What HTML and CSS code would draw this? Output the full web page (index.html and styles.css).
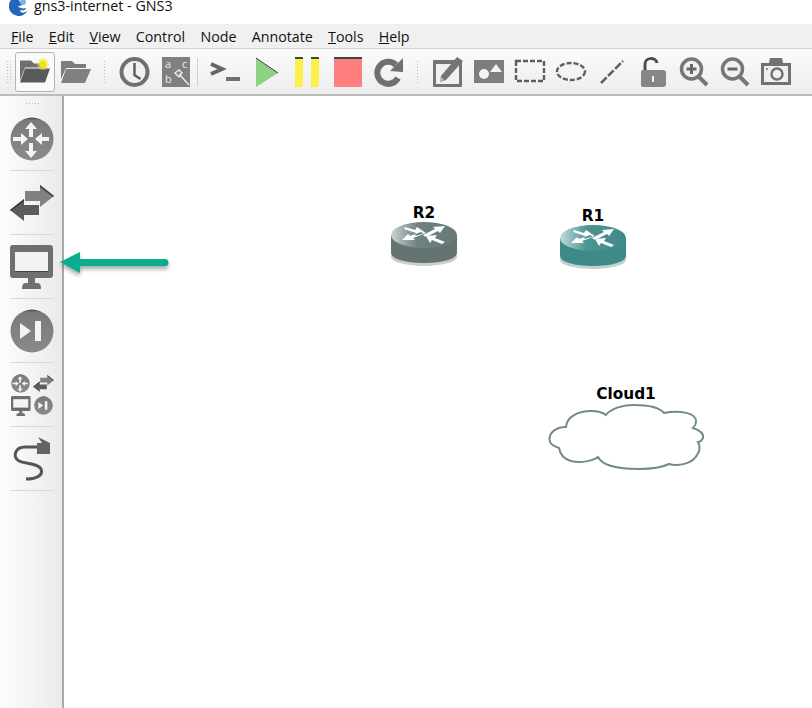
FILE: index.html
```html
<!DOCTYPE html>
<html lang="en">

<head>
    <meta charset="UTF-8">
    <meta name="viewport" content="width=device-width, initial-scale=1.0">
    <title>gns3-internet - GNS3</title>
    <link rel="stylesheet" href="styles.css">
</head>

<body>
    <svg class="defs" width="0" height="0">
        <defs>
            <linearGradient id="roundGrey" x1="0" y1="0" x2="0" y2="1">
                <stop offset="0" stop-color="#3c3c3c" />
                <stop offset="0.06" stop-color="#7a7a7a" />
                <stop offset="1" stop-color="#8a8a8a" />
            </linearGradient>
            <linearGradient id="sheenGrey" x1="0" y1="0" x2="1" y2="0">
                <stop offset="0" stop-color="#c9d3d2" />
                <stop offset="0.4" stop-color="#6f8280" />
                <stop offset="1" stop-color="#697a78" />
            </linearGradient>
            <linearGradient id="sheenTeal" x1="0" y1="0" x2="1" y2="0">
                <stop offset="0" stop-color="#c4dcdb" />
                <stop offset="0.4" stop-color="#4b9493" />
                <stop offset="1" stop-color="#3f8a89" />
            </linearGradient>
            <symbol id="dev-router" viewBox="0 0 44 44">
                <circle cx="22" cy="22" r="21.500" fill="url(#roundGrey)" />
                <path fill="#f4f4f4" d="M21 5l6 7h-4v8h-4v-8h-4zM21 41l6-7h-4v-8h-4v8h-4zM18 22l-7-6v4H3v4h8v4zM25 22l7-6v4h7v4h-7v4z" />
            </symbol>
            <symbol id="dev-switch" viewBox="0 0 44 36">
                <path fill="#808080" d="M15 6h15V0l14 11-14 11v-6H15z" />
                <path fill="#3c3c3c" d="M30 0l14 11-1 1-13-10z" />
                <path fill="#5c5c5c" d="M29 20H14v-6L0 25l14 11v-6h15z" />
                <path fill="#3c3c3c" d="M14 14L0 25l1 1 13-10z" />
            </symbol>
            <symbol id="dev-monitor" viewBox="0 0 44 44">
                <path fill="#6f6f6f" d="M3 0h37a3 3 0 0 1 3 3v27a3 3 0 0 1-3 3H25v5h3c2 0 3 2 3 6H12c0-4 1-6 3-6h3v-5H3a3 3 0 0 1-3-3V3a3 3 0 0 1 3-3z" />
                <rect x="5" y="7" width="33" height="19" fill="#f2f2f2" />
                <rect x="5" y="26" width="33" height="1" fill="#444" />
            </symbol>
            <symbol id="dev-end" viewBox="0 0 44 44">
                <circle cx="22" cy="22" r="21.500" fill="url(#roundGrey)" />
                <path fill="#f4f4f4" d="M10 14l11 8-11 8zM25 12h6v20h-6z" />
            </symbol>
            <symbol id="router-arrows" viewBox="0 0 66 44">
                <path fill="#fff" d="M14 5l10 3 2-3 9 6-11 3 1-3-12-4zM54 4L42 5l2 2-12 6 3 2 12-6 2 2zM11 18h13l-2-2 11-4-3-2-11 4-2-2zM35 14l11-1-2 3 10 4-3 2-10-4-2 3z" />
            </symbol>
        </defs>
    </svg>

    <div class="titlebar">
        <svg class="app-logo" width="20" height="16" viewBox="0 0 20 16">
            <path fill="#2467b8" d="M10 -4a10 10 0 1 0 9 14c-3 4-8 3-8 0 3 1 6 0 6-2-3 1-7 0-8-2 3 0 5-1 6-3-3 0-5-1-5-3z" />
            <circle cx="14" cy="2" r="3" fill="#7fb2e6" />
        </svg>
        <span class="app-name">gns3-internet - GNS3</span>
    </div>

    <nav class="menubar">
        <span class="menu-item"><u>F</u>ile</span>
        <span class="menu-item"><u>E</u>dit</span>
        <span class="menu-item"><u>V</u>iew</span>
        <span class="menu-item">Control</span>
        <span class="menu-item">Node</span>
        <span class="menu-item">Annotate</span>
        <span class="menu-item"><u>T</u>ools</span>
        <span class="menu-item"><u>H</u>elp</span>
    </nav>

    <div class="toolbar">
        <div class="tool-group first">
            <div class="tool active">
                <svg width="32" height="32" viewBox="0 0 32 32">
                    <g transform="translate(0 -2.500)">
                        <path fill="#6e6e6e" d="M1 7h11l3 3h12v4H6L1 27z" />
                        <path fill="#5a5a5a" d="M6 15h25l-5 14H1z" />
                    </g>
                    <circle cx="24" cy="8" r="6" fill="#f6ee3a" opacity="0.5" />
                    <circle cx="24" cy="8" r="3.500" fill="#f2e516" />
                </svg>
            </div>
            <div class="tool">
                <svg width="32" height="32" viewBox="0 0 32 32">
                    <g transform="translate(-1 -2)">
                        <path fill="#7c7c7c" d="M2 7h11l3 3h11v4H7L2 25z" />
                        <path fill="#808080" d="M7 15h25l-6 14H2z" />
                    </g>
                </svg>
            </div>
        </div>
        <div class="grip"></div>
        <div class="tool-group">
            <div class="tool">
                <svg width="32" height="32" viewBox="0 0 32 32">
                    <circle cx="15.500" cy="16" r="13" fill="#f1f1f1" stroke="#707070" stroke-width="4" />
                    <path fill="none" stroke="#5c5c5c" stroke-width="2.400" d="M15.500 7v12l6 4" />
                </svg>
            </div>
            <div class="tool">
                <svg width="32" height="32" viewBox="0 0 32 32">
                    <rect x="2" y="1" width="28" height="30" fill="#808080" />
                    <path fill="none" stroke="#ececec" stroke-width="1.400" d="M19 18l10 11M15 17l4-3 3 3-3 4z" />
                    <text x="5" y="12" class="abc">a</text>
                    <text x="22" y="12" class="abc">c</text>
                    <text x="5" y="27" class="abc">b</text>
                </svg>
            </div>
        </div>
        <div class="tool-sep"></div>
        <div class="tool-group">
            <div class="tool">
                <svg width="32" height="32" viewBox="0 0 32 32">
                    <path fill="none" stroke="#666" stroke-width="4" d="M2 8l11 5-11 5" />
                    <rect x="17" y="21" width="14" height="4" fill="#707070" />
                </svg>
            </div>
            <div class="tool">
                <svg width="32" height="32" viewBox="0 0 32 32">
                    <path fill="#8cd282" d="M6 2l22 15L6 31z" />
                    <path fill="none" stroke="#3d3d3d" stroke-width="1" d="M6 2l22 15" />
                </svg>
            </div>
            <div class="tool">
                <svg width="32" height="32" viewBox="0 0 32 32">
                    <rect x="4" y="1" width="8" height="30" fill="#fbf14d" />
                    <rect x="20" y="1" width="8" height="30" fill="#fbf14d" />
                    <rect x="4" y="1" width="8" height="2" fill="#444" />
                    <rect x="20" y="1" width="8" height="2" fill="#444" />
                </svg>
            </div>
            <div class="tool">
                <svg width="32" height="32" viewBox="0 0 32 32">
                    <rect x="2" y="1" width="28" height="30" fill="#fe7f7f" />
                    <rect x="2" y="1" width="28" height="2" fill="#444" />
                </svg>
            </div>
            <div class="tool">
                <svg width="32" height="32" viewBox="0 0 32 32">
                    <path fill="none" stroke="#707070" stroke-width="6" d="M25 22a11 11 0 1 1-2-13" />
                    <path fill="#707070" d="M17 15l13 1V2z" />
                </svg>
            </div>
        </div>
        <div class="grip"></div>
        <div class="tool-group">
            <div class="tool">
                <svg width="32" height="32" viewBox="0 0 32 32">
                    <rect x="1" y="4" width="29" height="27" rx="1" fill="#747474" />
                    <rect x="4" y="8" width="23" height="20" fill="#f1f1f1" />
                    <path fill="#747474" d="M9 20L25 1l6 4-17 19-6 2z" />
                    <path fill="#bdbdbd" d="M9 21l3 3-4 2z" />
                </svg>
            </div>
            <div class="tool">
                <svg width="32" height="32" viewBox="0 0 32 32">
                    <rect x="1" y="4" width="30" height="23" fill="#7d7d7d" />
                    <circle cx="11" cy="18" r="5" fill="#f3f3f3" />
                    <path fill="#f3f3f3" d="M23 8l6 8H17z" />
                </svg>
            </div>
            <div class="tool">
                <svg width="32" height="32" viewBox="0 0 32 32">
                    <rect x="2" y="5" width="28" height="20" fill="none" stroke="#5e5e5e" stroke-width="2.400" stroke-dasharray="5 2" />
                </svg>
            </div>
            <div class="tool">
                <svg width="32" height="32" viewBox="0 0 32 32">
                    <ellipse cx="16" cy="15.500" rx="14" ry="8.500" fill="none" stroke="#5e5e5e" stroke-width="2.400" stroke-dasharray="5 2" />
                </svg>
            </div>
            <div class="tool">
                <svg width="32" height="32" viewBox="0 0 32 32">
                    <path fill="none" stroke="#5e5e5e" stroke-width="2.500" stroke-dasharray="8 2" d="M5 27L27 5" />
                </svg>
            </div>
            <div class="tool">
                <svg width="32" height="32" viewBox="0 0 32 32">
                    <path fill="none" stroke="#4c4c4c" stroke-width="3" d="M8 15V8c0-7 11-7 12-1" />
                    <path fill="#868686" d="M4 16a2 2 0 0 1 2-2h20a3 3 0 0 1 3 3v11a3 3 0 0 1-3 3H6a2 2 0 0 1-2-2z" />
                    <path fill="#f1f1f1" d="M15 20h2v6h-2z" />
                </svg>
            </div>
            <div class="tool">
                <svg width="32" height="32" viewBox="0 0 32 32">
                    <circle cx="13.500" cy="13" r="10" fill="#f1f1f1" stroke="#777" stroke-width="3.500" />
                    <path fill="none" stroke="#777" stroke-width="4" d="M21 21l8 8" />
                    <path fill="none" stroke="#666" stroke-width="3" d="M8.500 13h10M13.500 8v10" />
                </svg>
            </div>
            <div class="tool">
                <svg width="32" height="32" viewBox="0 0 32 32">
                    <circle cx="13.500" cy="13" r="10" fill="#f1f1f1" stroke="#777" stroke-width="3.500" />
                    <path fill="none" stroke="#777" stroke-width="4" d="M21 21l8 8" />
                    <path fill="none" stroke="#666" stroke-width="3" d="M8.500 13h10" />
                </svg>
            </div>
            <div class="tool">
                <svg width="32" height="32" viewBox="0 0 32 32">
                    <path fill="#727272" d="M1 7h8l1-5h12l1 5h8v22H1z" />
                    <rect x="4" y="10" width="24" height="16" fill="#f0f0f0" />
                    <circle cx="17" cy="18" r="5.500" fill="#f0f0f0" stroke="#727272" stroke-width="2.500" />
                    <circle cx="7" cy="13" r="1" fill="#727272" />
                </svg>
            </div>
        </div>
    </div>

    <div class="workspace">
        <aside class="dock">
            <div class="dock-grip"></div>
            <div class="dock-item"><svg width="44" height="44"><use href="#dev-router" /></svg></div>
            <div class="dock-item"><svg width="44" height="36"><use href="#dev-switch" /></svg></div>
            <div class="dock-item"><svg width="44" height="44"><use href="#dev-monitor" /></svg></div>
            <div class="dock-item"><svg width="44" height="44"><use href="#dev-end" /></svg></div>
            <div class="dock-item">
                <div class="mini-grid">
                    <svg width="19" height="19"><use href="#dev-router" /></svg>
                    <svg width="21" height="17"><use href="#dev-switch" /></svg>
                    <svg width="20" height="20"><use href="#dev-monitor" /></svg>
                    <svg width="19" height="19"><use href="#dev-end" /></svg>
                </div>
            </div>
            <div class="dock-item">
                <svg width="38" height="44" viewBox="0 0 38 44">
                    <path fill="none" stroke="#555" stroke-width="3" d="M26 10H12C2 10 -1 20 6 24c6 3 19 2 22 8 3 7-6 10-15 10" />
                    <path fill="#636363" d="M24 6h13v11H24z" />
                    <path fill="#636363" d="M25 0l12 6H29z" />
                </svg>
            </div>
        </aside>

        <main class="canvas">
            <div class="node r2">
                <span class="node-label">R2</span>
                <svg width="66" height="44" viewBox="0 0 66 44">
                    <ellipse cx="33" cy="35" rx="33" ry="9" fill="#c9cfce" />
                    <path fill="#647471" d="M0 13v18c0 6 15 10 33 10s33-4 33-10V13z" />
                    <ellipse cx="33" cy="13" rx="33" ry="13" fill="url(#sheenGrey)" />
                    <use href="#router-arrows" width="66" height="44" />
                </svg>
            </div>
            <div class="node r1">
                <span class="node-label">R1</span>
                <svg width="66" height="44" viewBox="0 0 66 44">
                    <ellipse cx="33" cy="35" rx="33" ry="9" fill="#c3d0d0" />
                    <path fill="#3d8a89" d="M0 13v18c0 6 15 10 33 10s33-4 33-10V13z" />
                    <ellipse cx="33" cy="13" rx="33" ry="13" fill="url(#sheenTeal)" />
                    <use href="#router-arrows" width="66" height="44" />
                </svg>
            </div>
            <div class="node cloud">
                <span class="node-label">Cloud1</span>
                <svg width="156" height="68" viewBox="-1 -1 156 68">
                    <path fill="#fff" stroke="#73898c" stroke-width="2" d="M17 23C18 12 30 7 42 7C48 7 53 8 57 11C62 4 75 1 85 1C98 1 110 3 115 9C128 6 148 8 147 18C147 20 146 22 144 24C151 26 155 30 154 34C153 36 151 38 149 38C151 42 151 47 148 51C144 59 130 63 120 60C112 64 100 65 90 65C72 65 54 63 49 53C42 58 30 59 22 57C15 55 11 50 10 44C3 42 0 38 .5 34C1 28 9 22 17 23Z" />
                </svg>
            </div>
            <svg class="pointer" width="112" height="28" viewBox="0 0 112 28">
                <path fill="#0aae8e" d="M0 12L20 2v7h85a3.500 3.500 0 0 1 0 7H20v7z" />
            </svg>
        </main>
    </div>
</body>

</html>
```

FILE: styles.css
```css
body {
    margin: 0;
    height: 708px;
    overflow: hidden;
    display: flex;
    flex-direction: column;
    font-family: "Open Sans", Arial, sans-serif;
    color: #111;
    background-color: #fff;
}

.defs {
    position: absolute;
}

.titlebar {
    height: 24px;
    flex: none;
    display: flex;
    align-items: flex-start;
    padding-left: 9px;
    background-color: #fff;
    overflow: hidden;
}

.app-logo {
    flex: none;
}

.app-name {
    margin-left: 5px;
    font-size: 14.3px;
    line-height: 12px;
}

.menubar {
    height: 24px;
    flex: none;
    display: flex;
    align-items: center;
    padding-left: 11px;
    gap: 15.25px;
    font-size: 14.25px;
    background-color: #f0f0f0;
    border-bottom: 1px solid #d4d4d4;
}

.toolbar {
    height: 47px;
    flex: none;
    box-sizing: border-box;
    display: flex;
    align-items: center;
    padding: 1px 0 0 15px;
    background: linear-gradient(#fbfbfb, #ededed);
    border-bottom: 2px solid #bcbcbc;
}

.tool-group {
    display: flex;
}

.tool {
    width: 41px;
    height: 40px;
    display: flex;
    align-items: center;
    padding-left: 4px;
    box-sizing: border-box;
}

.tool.active {
    width: 40px;
    margin-right: 1px;
    padding-left: 3px;
    background-color: #fafafa;
    border: 1px solid #b4b4b4;
    border-radius: 3px;
}

.grip {
    width: 18px;
    height: 24px;
    background-image: radial-gradient(#bbb 0.7px, transparent 0.8px);
    background-size: 3px 3px;
    background-repeat: repeat-y;
    background-position: 6px 0;
}

.tool-sep {
    width: 1px;
    height: 28px;
    margin: 0 7px 0 0;
    background-color: #cfcfcf;
}

.first {
    position: relative;
}

.first::before {
    content: "";
    position: absolute;
    left: -9px;
    top: 8px;
    width: 6px;
    height: 24px;
    background-image: radial-gradient(#bbb 0.7px, transparent 0.8px);
    background-size: 3px 3px;
}

.abc {
    font-family: "Open Sans", Arial, sans-serif;
    font-size: 11px;
    fill: #ececec;
}

.workspace {
    flex: 1;
    display: flex;
    min-height: 0;
}

.dock {
    width: 62px;
    flex: none;
    background: linear-gradient(90deg, #fdfdfd, #eaeaea);
    border-right: 2px solid #a8a8a8;
}

.dock-grip {
    height: 11px;
    box-sizing: border-box;
    padding: 6px 21px 1px 25px;
    background-image: radial-gradient(#bbb 0.7px, transparent 0.8px);
    background-size: 3px 3px;
    background-origin: content-box;
    background-clip: content-box;
}

.dock-item {
    height: 64px;
    margin: 0 8px 0 10px;
    box-sizing: border-box;
    display: flex;
    align-items: center;
    justify-content: center;
    border-bottom: 1px solid #d8d8d8;
}

.mini-grid {
    display: grid;
    grid-template-columns: 21px 21px;
    align-items: center;
    justify-items: center;
    gap: 3px 2px;
}

.canvas {
    flex: 1;
    position: relative;
    background-color: #fff;
}

.node {
    position: absolute;
    display: flex;
    flex-direction: column;
    align-items: center;
}

.node-label {
    font-family: "DejaVu Sans", Verdana, sans-serif;
    font-weight: bold;
    font-size: 15.3px;
    line-height: 18px;
    color: #000;
}

.r2 {
    left: 327px;
    top: 108px;
}

.r1 {
    left: 496px;
    top: 111px;
}

.cloud {
    left: 484px;
    top: 289px;
}

.pointer {
    position: absolute;
    left: -4px;
    top: 154px;
    filter: drop-shadow(0 3px 2px rgba(0, 0, 0, 0.35));
}
```
